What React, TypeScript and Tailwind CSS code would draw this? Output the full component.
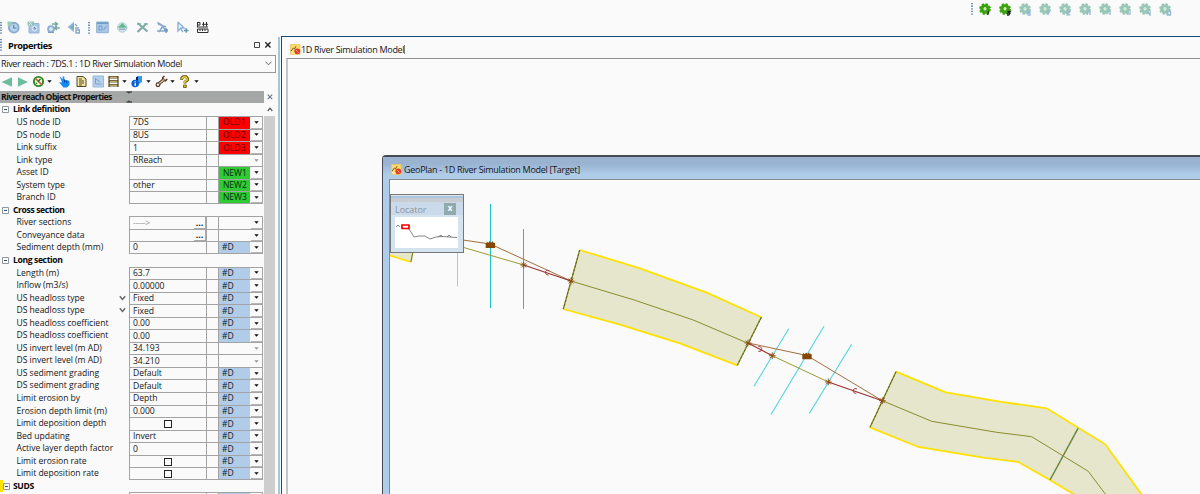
import type { ReactNode } from "react";

type Row = {
  label: string;
  value?: string;
  flag?: string;
  head?: boolean;
  check?: boolean;
  dots?: boolean;
  chevron?: boolean;
  dim?: boolean;
};

const rows: Row[] = [
  { label: "Link definition", head: true },
  { label: "US node ID", value: "7DS", flag: "OLD1" },
  { label: "DS node ID", value: "8US", flag: "OLD2" },
  { label: "Link suffix", value: "1", flag: "OLD3" },
  { label: "Link type", value: "RReach", dim: true },
  { label: "Asset ID", flag: "NEW1" },
  { label: "System type", value: "other", flag: "NEW2" },
  { label: "Branch ID", flag: "NEW3" },
  { label: "Cross section", head: true },
  { label: "River sections", value: "----->", dots: true },
  { label: "Conveyance data", dots: true },
  { label: "Sediment depth (mm)", value: "0", flag: "#D" },
  { label: "Long section", head: true },
  { label: "Length (m)", value: "63.7", flag: "#D" },
  { label: "Inflow (m3/s)", value: "0.00000", flag: "#D" },
  { label: "US headloss type", value: "Fixed", flag: "#D", chevron: true },
  { label: "DS headloss type", value: "Fixed", flag: "#D", chevron: true },
  { label: "US headloss coefficient", value: "0.00", flag: "#D" },
  { label: "DS headloss coefficient", value: "0.00", flag: "#D" },
  { label: "US invert level (m AD)", value: "34.193", dim: true },
  { label: "DS invert level (m AD)", value: "34.210", dim: true },
  { label: "US sediment grading", value: "Default", flag: "#D" },
  { label: "DS sediment grading", value: "Default", flag: "#D" },
  { label: "Limit erosion by", value: "Depth", flag: "#D" },
  { label: "Erosion depth limit (m)", value: "0.000", flag: "#D" },
  { label: "Limit deposition depth", check: true, flag: "#D" },
  { label: "Bed updating", value: "Invert", flag: "#D" },
  { label: "Active layer depth factor", value: "0", flag: "#D" },
  { label: "Limit erosion rate", check: true, flag: "#D" },
  { label: "Limit deposition rate", check: true, flag: "#D" },
  { label: "SUDS", head: true },
  { label: "", flag: " " },
];

function flagColor(flag?: string) {
  if (!flag) return "";
  if (flag.startsWith("OLD")) return "bg-[#fe0000] text-[#5c0000] pl-[4px] tracking-[0.1px]";
  if (flag.startsWith("NEW")) return "bg-[#2fcb33] text-[#042c0b] pl-[4px] tracking-[-0.1px]";
  return "bg-[#b0cce8] text-[#101822] pl-[3px]";
}

function Grip({ className = "" }: { className?: string }) {
  return (
    <svg width="2" height="12" viewBox="0 0 2 12" className={`shrink-0 ${className}`}>
      <path d="M1 0V12" stroke="#2b5b8c" strokeWidth="1.3" strokeDasharray="1.3 1.3" />
    </svg>
  );
}

function Icon({ children }: { children: ReactNode }) {
  return (
    <svg width="13" height="13" viewBox="0 0 13 13" fill="none" className="shrink-0">
      {children}
    </svg>
  );
}

function Caret({ dim = false }: { dim?: boolean }) {
  return (
    <svg width="5" height="3" viewBox="0 0 5 3" className="shrink-0">
      <path d="M0.3 0.2H4.7L2.5 2.7Z" fill={dim ? "#999" : "#111"} />
    </svg>
  );
}

function Gear({ active, index }: { active: boolean; index: number }) {
  const c = active ? "#3aa10f" : "#98c8b5";
  const d = active ? "#22272c" : "#97b5da";
  const marks = [
    "M10 8L8.6 12",
    "M8.3 8.5H11L8.8 10.2H11L9.8 12H8",
    "M8 8.3H10.8L9 10H11V12H8.4",
    "M8.3 8L9.6 10L11 8M9.6 10L8.8 12",
    "M8.3 8.5H11L8.3 11.8H11.4",
    "M8.3 12V8.5H11V12",
    "M8 8.4H11V12",
    "M9 8.4V12M11 8.4V12",
    "M8 8.4L11 12V8.4",
    "M8.3 8.4H11.5V12H8.3Z",
  ];
  return (
    <svg width="13" height="13" viewBox="0 0 13 13" fill="none" className="shrink-0">
      <circle cx="6" cy="6" r="4.9" stroke={c} strokeWidth="2" strokeDasharray="2.2 1.65" />
      <circle cx="6" cy="6" r="3.1" stroke={c} strokeWidth="3.4" />
      <circle cx="6" cy="5.6" r="1.3" fill={active ? "#c8f59a" : "#cfe6dd"} />
      <path d={marks[index]} stroke={d} strokeWidth="1.3" />
    </svg>
  );
}

function TopBar() {
  return (
    <div className="flex h-9 shrink-0">
      <div className="flex w-[210px] items-end pb-[2px]">
        <Grip />
        <div className="ml-[5px] flex gap-[7px]">
          <Icon>
            <circle cx="6.8" cy="6.7" r="4.9" fill="#b7d3ec" stroke="#87abd0" strokeWidth="1.9" />
            <path d="M0.5 0.5H5V4.5H0.5Z" fill="#9ccab8" />
            <path d="M6.7 3.8V7H9.5" stroke="#5f88b3" strokeWidth="1.2" />
          </Icon>
          <Icon>
            <path d="M2 2.5H12V12H2Z" fill="#a6c6e5" stroke="#94b5d6" />
            <path d="M0.5 0.5H7V4.5H0.5Z" fill="#93c3b4" />
            <circle cx="7.5" cy="7.5" r="2.4" stroke="#dceaf6" />
            <path d="M7.5 6V7.7H9" stroke="#6d93bd" />
            <path d="M2 1L5 4M5 1L2 4" stroke="#d4e8e1" />
          </Icon>
          <Icon>
            <circle cx="4" cy="8" r="2.9" fill="#d6e7f5" stroke="#8caed2" strokeWidth="1.9" />
            <path d="M5 3H10.5M8 1L10.5 3L8 5M12.8 7H8M10 5L7.6 7L10 9" stroke="#77ab9f" strokeWidth="1.5" />
            <path d="M1 11.5H7" stroke="#7b9dc2" />
          </Icon>
          <Icon>
            <path d="M0.5 6L7 0.8V11.2Z" fill="#94bbdf" />
            <path d="M3 6L7 2.8V9Z" fill="#72afb3" />
            <path d="M8 3L10 5M8 7H12M9 9H12.5V12H9Z" stroke="#8ba6c3" strokeWidth="1.4" />
          </Icon>
        </div>
        <Grip className="ml-[8px]" />
        <div className="ml-[6px] flex gap-[7px]">
          <Icon>
            <path d="M0.7 1H12.3V11.7H0.7Z" fill="#a9c8e6" stroke="#8cafd3" />
            <path d="M1 2.2H12" stroke="#7099c4" strokeWidth="1.6" />
            <path d="M3 5H6V9H3ZM7.5 9L10.5 5" stroke="#7a9fc7" />
          </Icon>
          <Icon>
            <circle cx="6.3" cy="6.5" r="4.7" fill="#d5e5ec" stroke="#b0cdd2" />
            <path d="M1.7 6.8L6.3 2L10.9 6.8Z" fill="#62b793" />
            <path d="M3 8.2H9.5" stroke="#8bb0bb" strokeWidth="1.4" />
          </Icon>
          <Icon>
            <path d="M1.5 2L11.5 10.5M1.5 11L10.5 2.5" stroke="#83a3aa" strokeWidth="2" />
            <path d="M1 3H5M8 3H12M5 6.5H8" stroke="#7db6a3" strokeWidth="1.6" />
          </Icon>
          <Icon>
            <path d="M1.5 1.5L7 5L3 11M6 5L11.5 11M1 10H10M2 3L10 6" stroke="#88a9d0" strokeWidth="1.6" />
            <path d="M8 9H12M10 7V12" stroke="#7195bd" strokeWidth="1.3" />
          </Icon>
          <Icon>
            <path d="M2 1V10L4.5 7.5L7 11M2 1L8 7H4.5" stroke="#8fb4da" strokeWidth="1.5" />
            <path d="M8 9.5H12.5M10.2 7.2V11.8" stroke="#6999a3" strokeWidth="1.5" />
          </Icon>
          <Icon>
            <path d="M1.5 1V6M1.5 1.5H4V4H1.5M7.5 1V5.5M10.5 1V5.5M6 3.3H12M1 6H12M1.5 8H12V11.5H1.5ZM4 8V10M6.5 8V10M9 8V10" stroke="#313131" />
          </Icon>
        </div>
      </div>
      <div className="ml-auto flex h-[18px] w-[229px] items-center">
        <Grip />
        <div className="ml-[6px] flex gap-[7px]">
          {Array.from({ length: 10 }, (_, i) => (
            <Gear key={i} index={i} active={i < 2} />
          ))}
        </div>
      </div>
    </div>
  );
}

function ObjectTools() {
  return (
    <div className="flex h-[18px] items-center pl-[1px]">
      <svg width="27" height="10" viewBox="0 0 27 10">
        <path d="M0.5 5L11 0.3V9.7Z" fill="#6bbd9e" />
        <path d="M26.8 5L17 0.3V9.7Z" fill="#6bbd9e" />
      </svg>
      <div className="ml-[4px] flex w-[20px] items-center justify-between">
        <Icon>
          <circle cx="6.5" cy="6.5" r="4.6" fill="#eef5df" stroke="#2f8a28" strokeWidth="1.9" />
          <path d="M3.5 3.5L9.5 9.5" stroke="#df5a32" strokeWidth="1.7" />
          <path d="M8.5 4L6 6.5M4 8.5L5 8" stroke="#1c6d1a" strokeWidth="1.3" />
        </Icon>
        <Caret />
      </div>
      <div className="ml-[6px] flex gap-[4px]">
        <Icon>
          <path d="M1.5 0.8L4.7 4.5V1.5H6.3V4.5L11.5 6V10L9 12.5H5.5L1 7.2L4 7.5Z" fill="#1689f2" />
          <path d="M6.5 4.5V7.5M8.8 5.5V8" stroke="#0544a8" />
        </Icon>
        <Icon>
          <path d="M2 1.5H8L11 4V11.5H2Z" fill="#f4e6a0" stroke="#4d4930" />
          <path d="M4 4H7M4 6H9M4 8H9M4 10H7" stroke="#4f4a2d" />
        </Icon>
        <Icon>
          <path d="M1 1H11.5V12H1Z" fill="#b3d0ed" stroke="#98b9dc" />
          <path d="M3.5 3V9H9.5M4 4L8 7" stroke="#859fc0" />
        </Icon>
      </div>
      <div className="ml-[2px] flex w-[20px] items-center justify-between">
        <Icon>
          <path d="M2 1V12M11 1V12" stroke="#625735" strokeWidth="1.3" />
          <path d="M2 2.3H11M2 6.3H11M2 10.3H11" stroke="#5d5436" strokeWidth="2.6" />
          <path d="M3 2.3H10M3 6.3H10M3 10.3H10" stroke="#dcc473" strokeWidth="1" />
        </Icon>
        <Caret />
      </div>
      <div className="ml-[4px] flex w-[20px] items-center justify-between">
        <Icon>
          <path d="M6 1H11V7L8 9L5 6Z" fill="#3599e8" />
          <path d="M5 2H7V6H5Z" fill="#111d5d" />
          <circle cx="4.2" cy="8.5" r="3.8" fill="#095fd1" />
          <path d="M4.2 8V11M4.2 6.2V7.2" stroke="#fff" strokeWidth="1.3" />
        </Icon>
        <Caret />
      </div>
      <div className="ml-[4px] flex w-[20px] items-center justify-between">
        <Icon>
          <path d="M3 9.5L9.5 4" stroke="#54402e" strokeWidth="3.2" />
          <circle cx="3" cy="9.7" r="1.8" fill="#fafafa" stroke="#59422d" strokeWidth="1.3" />
          <path d="M7.8 4.5V2.5L9.5 1M8.5 5L10.5 5.8L12.2 4" stroke="#59422d" strokeWidth="1.6" />
          <path d="M4.3 8.5L9.3 4.3" stroke="#e1b991" strokeWidth="1.4" />
        </Icon>
        <Caret />
      </div>
      <div className="ml-[3px] flex w-[21px] items-center justify-between">
        <Icon>
          <path d="M3.7 5V3.2L5.2 1.7H8L9.5 3.3V5L7 7V8.6" stroke="#574e13" strokeWidth="2.8" />
          <path d="M3.9 4.6V3.3L5.3 2H7.9L9.2 3.4V4.8L6.8 6.8V8.3" stroke="#f5d936" strokeWidth="1.4" />
          <path d="M5.5 10H8.3V12.5H5.5Z" fill="#e1bd12" stroke="#574e13" strokeWidth="0.8" />
        </Icon>
        <Caret />
      </div>
    </div>
  );
}

function PropertyRow({ row, lastInGroup }: { row: Row; lastInGroup: boolean }) {
  if (row.head) {
    return (
      <div className={`flex h-[12.55px] shrink-0 items-center ${row.label === "SUDS" ? "border-l-[3px] border-[#ffe500]" : "pl-[2px]"}`}>
        <svg width="7" height="7" viewBox="0 0 7 7" className="shrink-0">
          <path d="M0.5 0.5H6.5V6.5H0.5Z" fill="#fff" stroke="#8e98a1" />
          <path d="M2 3.5H5" stroke="#2e4f75" />
        </svg>
        <span className={`text-[8.6px] font-bold tracking-[-0.38px] text-[#080808] ${row.label === "SUDS" ? "ml-[3px]" : "ml-[4px]"}`}>{row.label}</span>
      </div>
    );
  }
  return (
    <div className="flex h-[12.55px] shrink-0">
      <div className="flex w-[129px] items-center justify-between pr-[3px] pl-[16.5px]">
        <span className="tracking-[-0.03px]">{row.label}</span>
        {row.chevron && (
          <svg width="7" height="6" viewBox="0 0 7 6">
            <path d="M0.8 1.2L3.5 4.4L6.2 1.2" fill="none" stroke="#666" strokeWidth="1.5" />
          </svg>
        )}
      </div>
      <div className={`flex w-[134px] border-t border-r border-l border-[#a3a3a3] ${lastInGroup ? "border-b" : ""}`}>
        <div className={`flex w-[76px] items-center ${row.check ? "justify-center" : "justify-between pl-[3px]"}`}>
          {row.check ? (
            <span className="size-[8px] border border-[#222]" />
          ) : (
            <span className={row.value === "----->" ? "tracking-[-0.3px] text-[#999]" : "tracking-[-0.05px]"}>{row.value}</span>
          )}
          {row.dots && (
            <span className="flex h-full w-[12px] items-end justify-center border-r border-b border-[#aaa] text-[9px] leading-[10px] font-bold">...</span>
          )}
        </div>
        <div className="w-[13px] border-r border-l border-[#a3a3a3]" />
        <div className={`flex w-[31px] items-center ${flagColor(row.flag)}`}>{row.flag?.trim()}</div>
        <div className={`ml-[1px] flex w-[11px] items-center justify-center ${row.dim ? "" : "border-b border-[#b5b5b5]"}`}>
          <Caret dim={row.dim} />
        </div>
      </div>
    </div>
  );
}

function PropertiesPanel() {
  return (
    <div className="flex w-[278px] shrink-0 flex-col overflow-hidden">
      <div className="flex h-[19px] items-center">
        <Grip />
        <span className="ml-[6px] pt-[1px] text-[9.2px] font-bold tracking-[-0.38px] text-[#080808]">Properties</span>
        <svg width="20" height="8" viewBox="0 0 20 8" className="ml-auto mr-[5px]" fill="none">
          <path d="M1.5 1.5H6.5V6.5H1.5Z" stroke="#444" />
          <path d="M12.3 1.3L17.5 6.5M17.5 1.3L12.3 6.5" stroke="#222" strokeWidth="1.4" />
        </svg>
      </div>
      <div className="flex h-[18px] w-[276px] items-center justify-between border border-l-0 border-[#999] pr-[3px] pl-[1px] text-[9px]">
        <span className="tracking-[-0.32px]">River reach : 7DS.1 : 1D River Simulation Model</span>
        <svg width="7" height="5" viewBox="0 0 7 5" fill="none">
          <path d="M0.5 0.7L3.5 3.8L6.5 0.7" stroke="#666" />
        </svg>
      </div>
      <ObjectTools />
      <div className="flex h-[12.5px] items-center">
        <div className="flex h-full w-[263.5px] items-center bg-[#a6a8a7] pl-[1px] text-[8.7px] font-bold text-[#101010]">
          <span className="w-[125px] tracking-[-0.57px]">River reach Object Properties</span>
          <svg width="7" height="12" viewBox="0 0 7 12">
            <path d="M0.5 1H6M3 1V2.5M0.5 11H6M3 9.5V11" stroke="#222" />
          </svg>
        </div>
        <svg width="6" height="6" viewBox="0 0 6 6" className="ml-[3px]">
          <path d="M0.7 0.7L5.2 5.2M5.2 0.7L0.7 5.2" stroke="#6a7783" strokeWidth="1.1" />
        </svg>
      </div>
      <div className="flex h-[391px] overflow-hidden">
        <div className="flex w-[264px] shrink-0 flex-col">
          {rows.map((row, i) => (
            <PropertyRow key={i} row={row} lastInGroup={Boolean(rows[i + 1]?.head)} />
          ))}
        </div>
        <div className="flex w-[11px] flex-col">
          <div className="flex h-[12.5px] items-center justify-center">
            <svg width="6" height="5" viewBox="0 0 6 5" fill="none">
              <path d="M0.7 4L3 1.2L5.3 4" stroke="#555" strokeWidth="1.2" />
            </svg>
          </div>
          <div className="grow bg-[#cdcdcd]" />
        </div>
      </div>
    </div>
  );
}

function AppIcon() {
  return (
    <svg width="11" height="11" viewBox="0 0 11 11" className="shrink-0">
      <path d="M0.5 0.5H10V10.3H0.5Z" fill="#ffd966" stroke="#e9c463" strokeWidth="0.8" />
      <path d="M1.2 7L3.3 4L4.5 5L6 2.2" stroke="#6b5d34" fill="none" />
      <path d="M1 9H5" stroke="#fff4cc" />
      <circle cx="7.3" cy="7.3" r="2.9" fill="#e23a23" />
      <path d="M6 6.2L8.6 8.6" stroke="#ffb9ae" strokeWidth="0.9" />
    </svg>
  );
}

function Junction({ x, y }: { x: number; y: number }) {
  return (
    <path
      transform={`translate(${x} ${y})`}
      d="M-3.4 0H3.4M0 -3.4V3.4M-2.4 -2.4L2.4 2.4M-2.4 2.4L2.4 -2.4"
      stroke="#8a4a10"
      strokeWidth="0.9"
    />
  );
}

function Bridge({ x, y }: { x: number; y: number }) {
  return (
    <path
      transform={`translate(${x} ${y})`}
      d="M-4.7 3.2V-1.8H-3.7V-3.4L-2.2 -1.8L-0.8 -3.6L0.6 -1.8L2 -3.6L3 -1.8L3.8 -3V-1.8H4.7V3.2Z"
      fill="#864600"
    />
  );
}

function RiverMap() {
  return (
    <svg width="810" height="314" viewBox="390 180 810 314" fill="none" className="block">
      <path d="M389 242L413 242L411 262L389 255Z" fill="#e6e6cc" />
      <path d="M389 255.3L411 262" stroke="#ffe100" strokeWidth="1.8" />
      <path d="M411 262L413 251" stroke="#84861e" strokeWidth="1.3" />

      <path d="M579.7 250L640 268.3L706.7 292.7L761.3 317.3L737.3 365.3L680 343.3L620 324.7L563.3 309Z" fill="#e6e6cc" />
      <path d="M579.7 250L640 268.3L706.7 292.7L761.3 317.3M737.3 365.3L680 343.3L620 324.7L563.3 309" stroke="#ffe100" strokeWidth="1.8" />
      <path d="M579.7 250L563.3 309M761.3 317.3L737.3 365.3" stroke="#84861e" strokeWidth="1.3" />
      <path d="M579.7 250L563.3 309M761.3 317.3L737.3 365.3" stroke="#5d6114" strokeWidth="1" strokeDasharray="2 2" />
      <path d="M571 281L633.3 299.7L693.3 320L748 343.3" stroke="#8b8c2c" />

      <path d="M896 371.7L945.7 392.3L1000 401.7L1046.7 408.3L1105.3 444.3L1142 495H1075L1050 480L1018.3 462L983.3 457.7L918.3 447L870 427.3Z" fill="#e6e6cc" />
      <path d="M896 371.7L945.7 392.3L1000 401.7L1046.7 408.3L1105.3 444.3L1142 495M1075 495L1050 480L1018.3 462L983.3 457.7L918.3 447L870 427.3" stroke="#ffe100" strokeWidth="1.8" />
      <path d="M896 371.7L870 427.3" stroke="#84861e" strokeWidth="1.3" />
      <path d="M896 371.7L870 427.3" stroke="#5d6114" strokeWidth="1" strokeDasharray="2 2" />
      <path d="M1078 428.3L1050 480" stroke="#777b1a" strokeWidth="1.4" />
      <path d="M1078 428.3L1050 480" stroke="#4aa08d" strokeWidth="1" strokeDasharray="3 3" />
      <path d="M882.3 400.7L931.7 421.3L996.7 432.3L1031.7 436.7L1088.3 471.3L1106 495" stroke="#8b8c2c" />

      <path d="M457.5 252V286.5" stroke="#7edfe0" />
      <path d="M490.5 204V308M523.5 229V309" stroke="#18c4c4" />
      <path d="M788.7 328.7L754 386.3M824 326.3L771 414.5M851.7 344.3L809.3 413.5" stroke="#4fd5df" strokeWidth="1.1" />

      <path d="M463 247.3L523.7 265M772.3 355.7L828.3 382" stroke="#9a9a35" />
      <path d="M463 240L490.3 244L571 281M748 343L807 355.5L882.3 400.7" stroke="#a56e3c" />
      <path d="M523.7 265L571 281M748 343L772.3 355.7M828.3 382L882.3 400.7" stroke="#962f2d" strokeWidth="1.1" />
      <path d="M549.3 271C546.5 269.4 544.7 271.5 545.7 273.5C546.2 274.8 547.5 275 548.5 275M857 389C854 387.7 852.5 390 853.5 392C854 393.3 855.5 393.5 856.4 393M758.5 346.5C761.5 346.5 762.3 348.5 761.5 350C760.8 351.5 759.5 351.5 758.3 351.3" stroke="#a02f30" />
      <Junction x={523.7} y={265} />
      <Junction x={571} y={281} />
      <Junction x={748} y={343} />
      <Junction x={772.3} y={355.7} />
      <Junction x={828.3} y={382} />
      <Junction x={882.3} y={400.7} />
      <Bridge x={490.4} y={244.7} />
      <Bridge x={807} y={356} />
    </svg>
  );
}

function Locator() {
  return (
    <div className="absolute top-[14px] left-0 flex h-[59px] w-[74px] flex-col border border-[#777] bg-[#d3e3ef]">
      <div className="h-px bg-[#dfe6ec]" />
      <div className="h-[2px] bg-[#a9c5e2]" />
      <div className="h-[4px] bg-[#c9cdd1]" />
      <div className="flex h-[13px] shrink-0 items-center justify-between bg-[#cbdaeb] pr-[7px] pl-[4px]">
        <span className="mt-[2px] text-[9px] tracking-[-0.05px] text-[#8b959e]">Locator</span>
        <span className="flex h-[12px] w-[12px] items-center justify-center bg-[#90abb0] pb-px text-[8px] font-bold text-white">x</span>
      </div>
      <svg width="63" height="31" viewBox="0 0 63 31" fill="none" className="mt-[2px] ml-[4px] shrink-0">
        <path d="M0 0H63V31H0Z" fill="#fff" />
        <path d="M1 10L3 8L5 10M13 11L16 15L19 20L24 19L30 19L35 22L41 20L46 19.5L54 20L62 20.5M43 20L46 18L48 20M52 20L54 18L56 20" stroke="#777" strokeWidth="0.9" />
        <path d="M7 8H14V11.5H7Z" fill="#fff" stroke="#f50000" strokeWidth="1.7" />
      </svg>
    </div>
  );
}

export default function App() {
  return (
    <div className="flex h-[494px] w-[1200px] flex-col overflow-hidden bg-[#fafafa] font-['Open_Sans','Noto_Sans',sans-serif] text-[8.6px] leading-none font-medium whitespace-nowrap text-[#151515]">
      <TopBar />
      <div className="flex h-[458px]">
        <PropertiesPanel />
        <div className="mt-[1px] mr-[1px] w-[2px] shrink-0 bg-[#9dcae2]" />
        <div className="flex w-[919px] flex-col border-t border-l border-[#124b78] pl-[4px]">
          <div className="flex h-[21px] shrink-0 items-center pt-[4px] pl-[4px] text-[9px]">
            <AppIcon />
            <span className="border-r border-[#888] tracking-[-0.3px]">1D River Simulation Model</span>
          </div>
          <div className="flex grow flex-col border-t border-l-2 border-t-[#909090] border-l-[#c5c5c5] pt-[96px] pl-[94px]">
            <div className="flex h-[340px] flex-col rounded-tl-[4px] border-t-2 border-l border-[#474b50] bg-[#afcce9] pl-[6px]">
              <div className="-ml-[6px] flex h-[22px] shrink-0 items-center bg-linear-to-b from-[#99b3d1] from-30% to-[#afcce9] to-80% pt-[2px] pl-[8px] text-[9px]">
                <AppIcon />
                <span className="ml-[2px] tracking-[-0.29px]">GeoPlan - 1D River Simulation Model [Target]</span>
              </div>
              <div className="relative h-[316px] border-t border-l border-[#888] bg-[#fafafa]">
                <RiverMap />
                <Locator />
              </div>
            </div>
          </div>
        </div>
      </div>
    </div>
  );
}
